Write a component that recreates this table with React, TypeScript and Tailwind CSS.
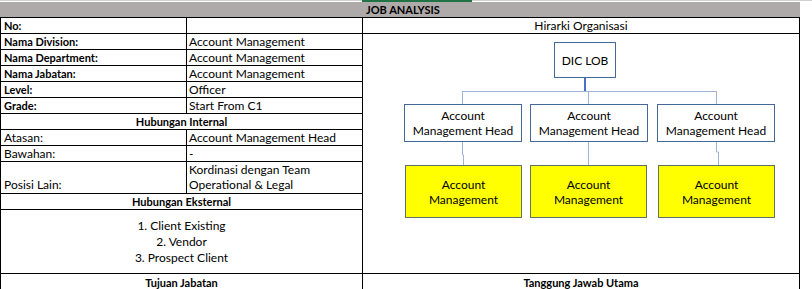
import React from "react";

const fields = [
  { label: "No:", value: "" },
  { label: "Nama Division:", value: "Account Management" },
  { label: "Nama Department:", value: "Account Management" },
  { label: "Nama Jabatan:", value: "Account Management" },
  { label: "Level:", value: "Officer" },
  { label: "Grade:", value: "Start From C1" },
];

const heads = [41, 167, 294];
const teams = [42, 167, 295];

const App = () => {
  return (
    <div className="w-[812px] h-[289px] overflow-hidden bg-white text-black font-['Lato',sans-serif] text-[12px] leading-[15px]">
      {/* top strip */}
      <div className="h-[2px] border-t border-[#d0d0d0] flex">
        <div className="ml-[362px] w-[110px] h-[2px] -mt-px bg-[#217346]" />
      </div>

      {/* header */}
      <div className="w-[800px] h-[16px] bg-[#aeaaaa] border-b border-black flex items-center pl-[366px]">
        <span className="font-bold text-[11px]">JOB ANALYSIS</span>
      </div>

      <div className="flex w-[800px]">
        {/* left table */}
        <div className="w-[362px] border-l border-black flex flex-col">
          {fields.map((f) => (
            <div key={f.label} className="flex h-[16px] border-b border-black">
              <div className="w-[186px] border-r border-black px-[3px] font-bold text-[11px] flex items-center">{f.label}</div>
              <div className="flex-1 px-[2px] flex items-center">{f.value}</div>
            </div>
          ))}
          <div className="h-[16px] border-b border-black flex items-center justify-center font-bold text-[11px]">Hubungan Internal</div>
          <div className="flex h-[16px] border-b border-black">
            <div className="w-[186px] border-r border-black px-[3px] flex items-center">Atasan:</div>
            <div className="flex-1 px-[2px] flex items-center">Account Management Head</div>
          </div>
          <div className="flex h-[16px] border-b border-black">
            <div className="w-[186px] border-r border-black px-[3px] flex items-center">Bawahan:</div>
            <div className="flex-1 px-[2px] flex items-center">-</div>
          </div>
          <div className="flex h-[32px] border-b border-black">
            <div className="w-[186px] border-r border-black px-[3px] pb-px flex items-end">Posisi Lain:</div>
            <div className="flex-1 px-[2px] pb-px flex flex-col justify-end">
              <span>Kordinasi dengan Team</span>
              <span>Operational &amp; Legal</span>
            </div>
          </div>
          <div className="h-[16px] border-b border-black flex items-center justify-center font-bold text-[11px]">Hubungan Eksternal</div>
          <div className="h-[64px] border-b border-black flex flex-col items-center justify-center leading-[16px]">
            <span>1. Client Existing</span>
            <span>2. Vendor</span>
            <span>3. Prospect Client</span>
          </div>
          <div className="h-[16px] flex items-center justify-center font-bold text-[11px]">Tujuan Jabatan</div>
        </div>

        {/* right panel */}
        <div className="w-[438px] border-l border-r border-black flex flex-col">
          <div className="h-[16px] border-b border-black flex items-center justify-center">Hirarki Organisasi</div>
          <div className="relative h-[240px] border-b border-black">
            <svg className="absolute inset-0" width="436" height="239" fill="none">
              <line x1="222" y1="44" x2="222" y2="58" stroke="#4472c4" strokeWidth="2" />
              <line x1="99" y1="57.5" x2="354" y2="57.5" stroke="#9fb3d6" />
              <line x1="99.5" y1="57" x2="99.5" y2="70" stroke="#9fb3d6" />
              <line x1="225.5" y1="57" x2="225.5" y2="70" stroke="#9fb3d6" />
              <line x1="353.5" y1="57" x2="353.5" y2="70" stroke="#9fb3d6" />
              <polyline points="99.5,108 99.5,121 100.5,121 100.5,131" stroke="#9fb3d6" />
              <polyline points="225.5,108 225.5,131" stroke="#9fb3d6" />
              <polyline points="353.5,108 353.5,118 355.5,118 355.5,131" stroke="#9fb3d6" />
            </svg>
            <div className="absolute left-[191px] top-[8px] w-[62px] h-[36px] border border-[#44689a] bg-white flex items-center justify-center">
              DIC LOB
            </div>
            {heads.map((x) => (
              <div
                key={x}
                style={{ left: x }}
                className="absolute top-[70px] w-[118px] h-[38px] border border-[#44689a] bg-white flex flex-col items-center justify-center"
              >
                <span>Account</span>
                <span>Management Head</span>
              </div>
            ))}
            {teams.map((x) => (
              <div
                key={x}
                style={{ left: x }}
                className="absolute top-[131px] w-[117px] h-[53px] border border-[#627262] bg-[#ffff00] flex flex-col items-center justify-center"
              >
                <span>Account</span>
                <span>Management</span>
              </div>
            ))}
          </div>
          <div className="h-[16px] flex items-center justify-center font-bold text-[11px]">Tanggung Jawab Utama</div>
        </div>
      </div>
    </div>
  );
};

export default App;
